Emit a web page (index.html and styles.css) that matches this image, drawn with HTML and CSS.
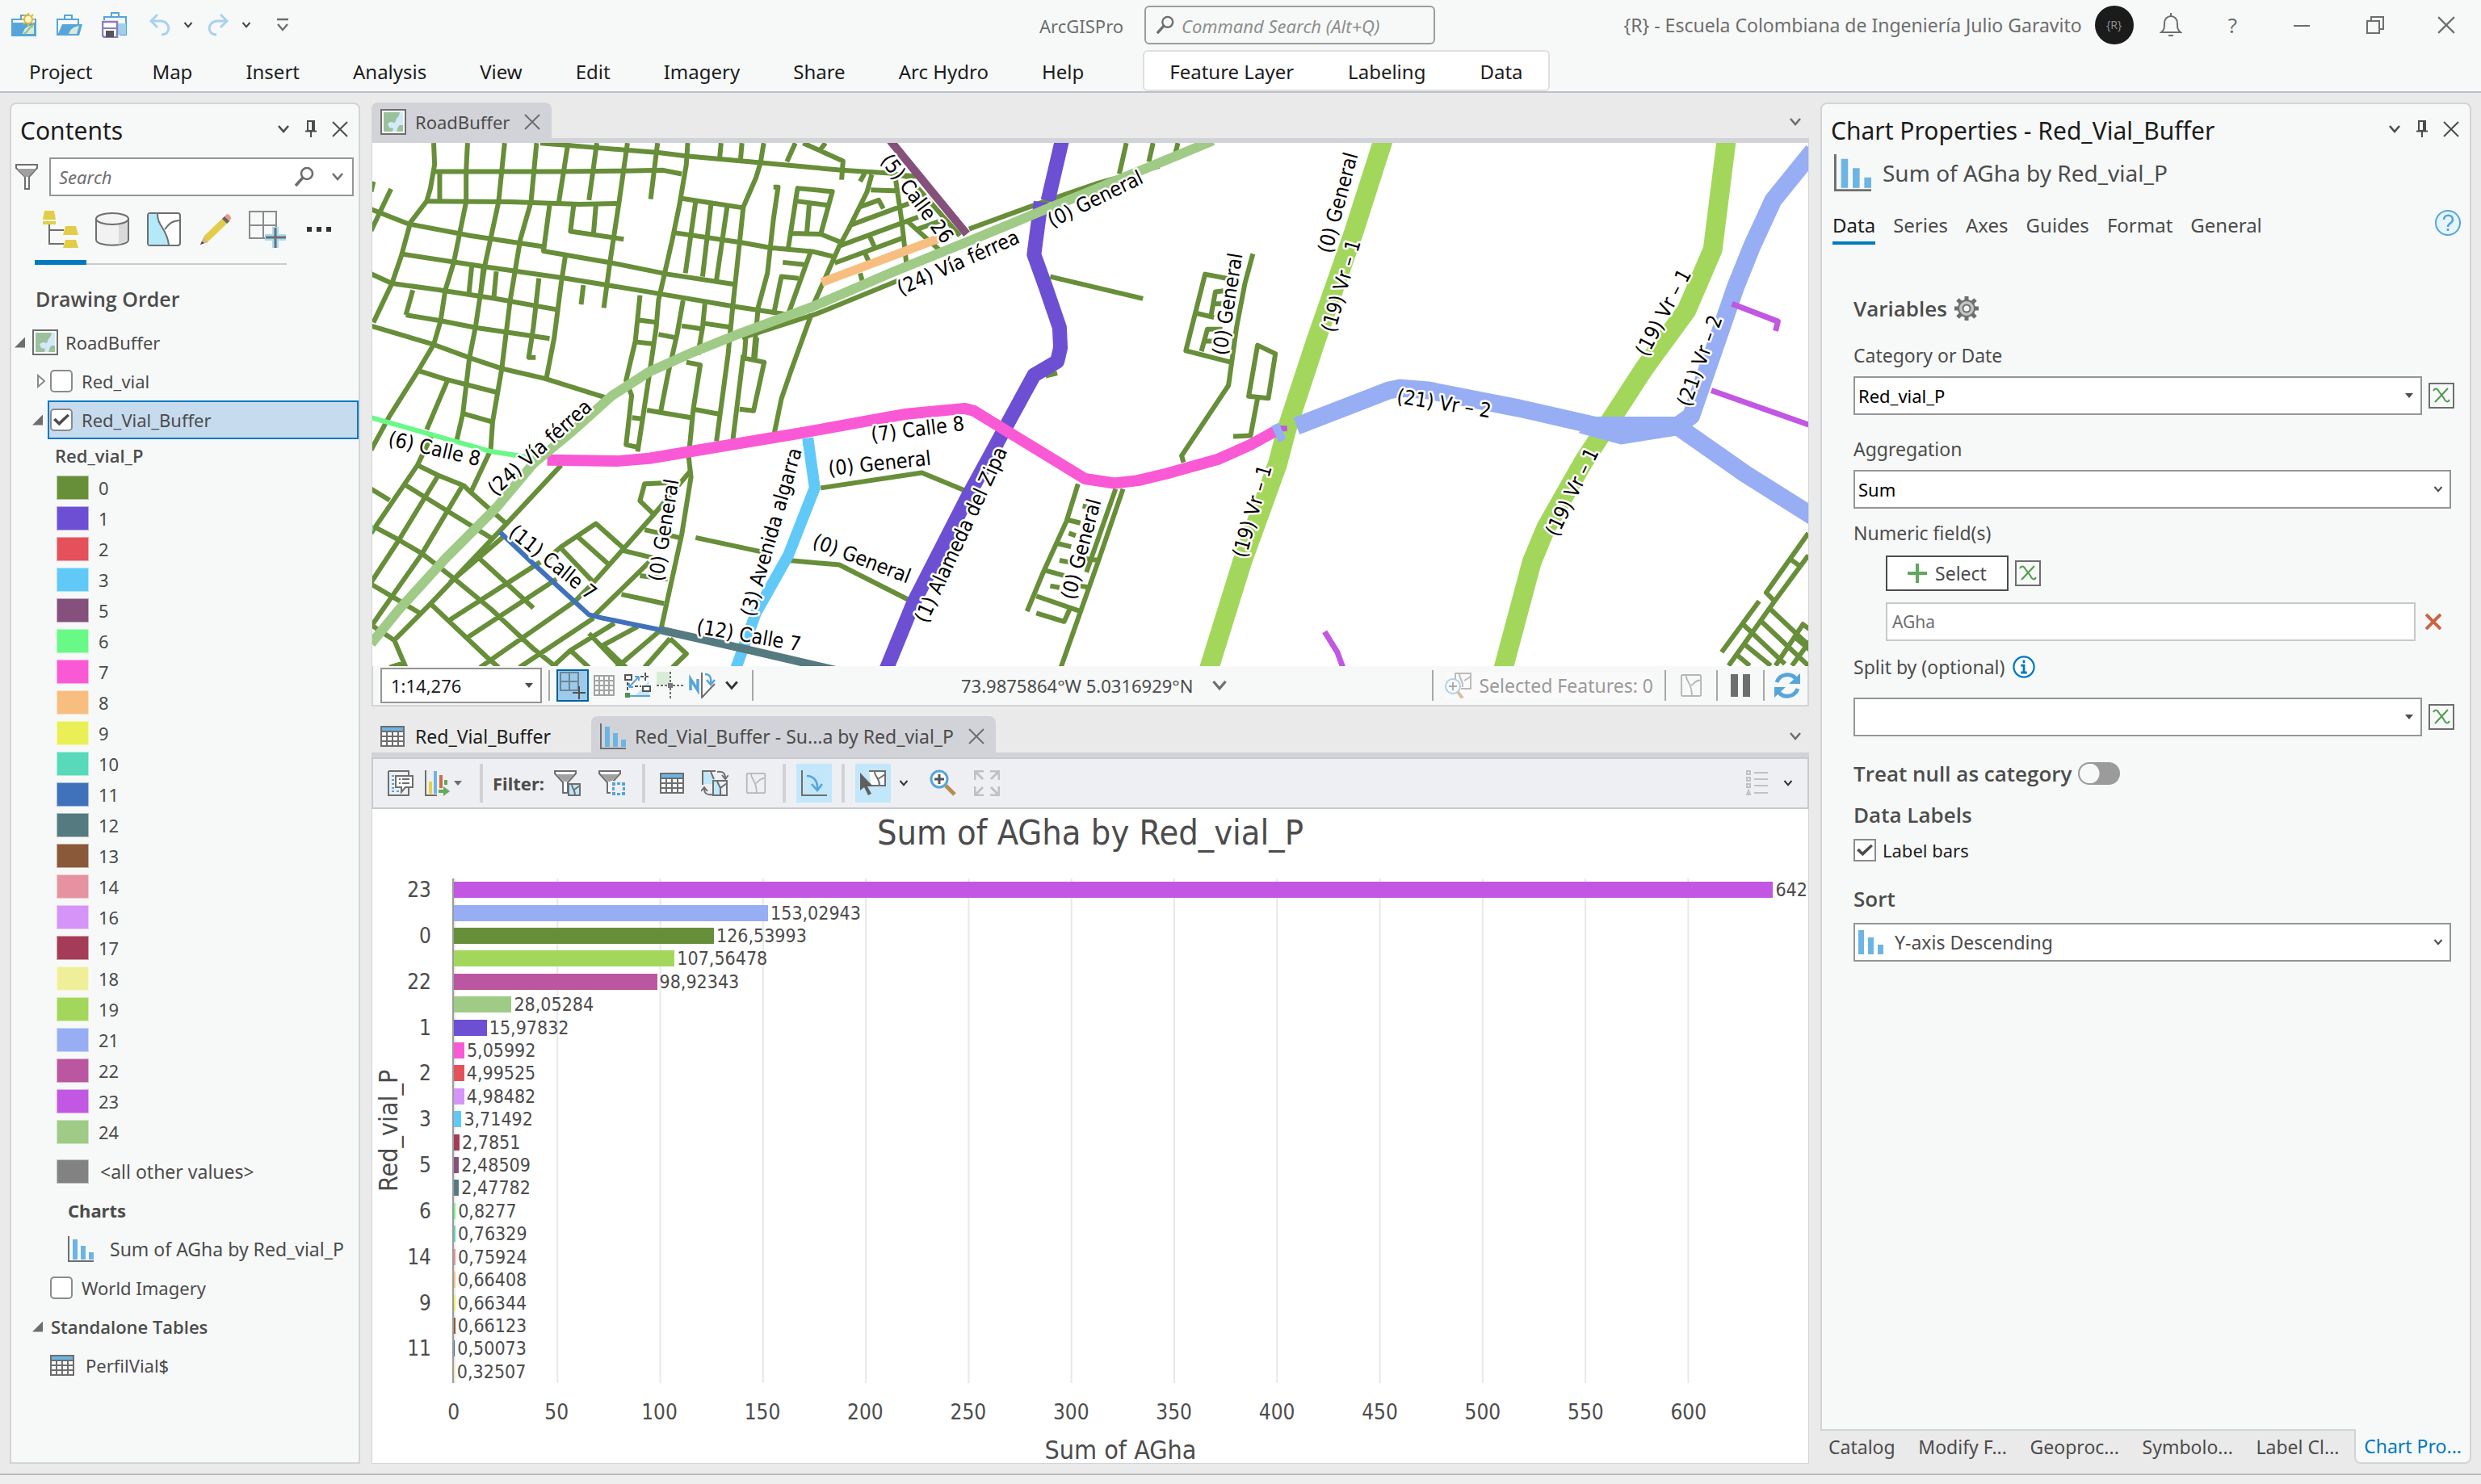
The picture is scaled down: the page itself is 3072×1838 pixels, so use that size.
FILE: index.html
```html
<!DOCTYPE html>
<html lang="en">
<head>
<meta charset="utf-8">
<title>ArcGISPro - RoadBuffer</title>
<link rel="stylesheet" href="styles.css">
</head>
<body>
<svg class="defs" aria-hidden="true">
  <symbol id="i-chev" viewBox="0 0 16 16"><path d="M2 4l6 7 6-7" fill="none" stroke="currentColor" stroke-width="2.6"/></symbol>
  <symbol id="i-tri" viewBox="0 0 12 12"><path d="M1 3h10L6 9z" fill="currentColor"/></symbol>
  <symbol id="i-close" viewBox="0 0 20 20"><path d="M1 1l18 18M19 1L1 19" fill="none" stroke="currentColor" stroke-width="2"/></symbol>
  <symbol id="i-pin" viewBox="0 0 16 22"><path d="M4 1h8v12H4zM1 13.500h14M8 13v8" fill="none" stroke="currentColor" stroke-width="2"/><path d="M9 2h3v11H9z" fill="currentColor"/></symbol>
  <symbol id="i-search" viewBox="0 0 26 26"><circle cx="16" cy="9" r="7" fill="none" stroke="currentColor" stroke-width="2.600"/><path d="M11 14L2 24" stroke="currentColor" stroke-width="3.600"/></symbol>
  <symbol id="i-chart" viewBox="0 0 32 32"><path d="M1 0v31h31" fill="none" stroke="#6e6e6e" stroke-width="2"/><path d="M6 4h6v25H6zM16 12h6v17h-6zM26 20h6v9h-6z" fill="#6cb5e3"/></symbol>
  <symbol id="i-table" viewBox="0 0 30 26"><path d="M0 0h30v26H0z" fill="#6e6e6e"/><path d="M2 2h26v4H2z" fill="#6cb5e3"/><path d="M2 8h5v4H2zM9 8h5v4H9zM16 8h5v4h-5zM23 8h5v4h-5zM2 14h5v4H2zM9 14h5v4H9zM16 14h5v4h-5zM23 14h5v4h-5zM2 20h5v4H2zM9 20h5v4H9zM16 20h5v4h-5zM23 20h5v4h-5z" fill="#fff"/></symbol>
  <symbol id="i-map" viewBox="0 0 32 32"><path d="M1 1h30v30H1z" fill="#fff" stroke="#6e6e6e" stroke-width="2"/><path d="M4 4h24v24H4z" fill="#9bc19c"/><path d="M24 4h4v16h-4l-2 2-2 6h-5l1-4-5-1-2-5 4-2 5 1 2-5 3-4z" fill="#d3e9f8"/></symbol>
  <symbol id="i-fx" viewBox="0 0 32 32"><path d="M1 1h30v30H1z" fill="#f7f9f8" stroke="#6e6e6e" stroke-width="2"/><path d="M6 10c2-4 5-3 7 1l6 8c2 5 5 6 7 2M24 7L8 24" fill="none" stroke="#4f9a4c" stroke-width="2"/></symbol>
  <symbol id="i-selmap" viewBox="0 0 28 30"><path d="M2 1h23q2 0 2 2v24q0 2-2 2H3q-2 0-2-2V2z" fill="none" stroke="currentColor" stroke-width="2"/><path d="M7 2c1 9 8 9 8 27M14 15c4-2 5-7 12-7" fill="none" stroke="currentColor" stroke-width="2"/></symbol>
</svg>

<header class="titlebar">
  <div class="quick">
    <button aria-label="New project"><svg viewBox="0 0 32 30" width="32" height="30"><path d="M1 28V8h11V3h7v5h11v20z" fill="none" stroke="#56a5da" stroke-width="2"/><path d="M0 12h30v16H0z" fill="#56a5da"/><path d="M14 26c2-8 6-10 14-11v11z" fill="#d8ead7"/><path d="M16 26c6-3 4-8 11-10" stroke="#8fbf8c" stroke-width="2" fill="none"/><circle cx="21" cy="8" r="5" fill="#fff7c9" stroke="#dcb93b" stroke-width="2"/><path d="M21 0v3M21 13v3M13 8h3M26 8h3M15 2l2 2M27 2l-2 2M15 14l2-2M27 14l-2-2" stroke="#dcb93b" stroke-width="2"/></svg></button>
    <button aria-label="Open project"><svg viewBox="0 0 32 30" width="32" height="30"><path d="M1 28V8h26v6M10 8V3h9v5" fill="none" stroke="#56a5da" stroke-width="2"/><path d="M1 28l6-14h25l-4 14z" fill="#56a5da"/><path d="M15 26c2-6 6-9 13-10l-3 10z" fill="#d8ead7"/></svg></button>
    <button aria-label="Save project"><svg viewBox="0 0 32 32" width="32" height="32"><path d="M3 10V6h27v22h-8M12 6V1h9v5" fill="none" stroke="#56a5da" stroke-width="2"/><path d="M20 14h10v14H20z" fill="#9fd0ea"/><path d="M1 12h18v19H3l-2-2z" fill="#fff" stroke="#8d7cc0" stroke-width="2.500"/><path d="M2 20h16" stroke="#8d7cc0" stroke-width="2"/><path d="M5 23h10v8H5z" fill="#555"/></svg></button>
    <button aria-label="Undo" class="pale"><svg viewBox="0 0 28 30" width="28" height="30"><path d="M11 2L3 10l8 8M3 10h12c13 1 13 17 1 17" fill="none" stroke="currentColor" stroke-width="3"/></svg></button>
    <button aria-label="Undo list" class="tiny"><svg width="12" height="12"><use href="#i-chev"/></svg></button>
    <button aria-label="Redo" class="pale"><svg viewBox="0 0 28 30" width="28" height="30"><path d="M17 2l8 8-8 8M25 10H13C0 11 0 27 12 27" fill="none" stroke="currentColor" stroke-width="3"/></svg></button>
    <button aria-label="Redo list" class="tiny"><svg width="12" height="12"><use href="#i-chev"/></svg></button>
    <button aria-label="Customize" class="custom"><svg viewBox="0 0 16 18" width="16" height="18"><path d="M1 2h14M2 8l6 7 6-7" fill="none" stroke="#6e6e6e" stroke-width="2.400"/></svg></button>
  </div>
  <span class="app-name">ArcGISPro</span>
  <label class="command"><svg width="24" height="24"><use href="#i-search"/></svg><input type="text" placeholder="Command Search (Alt+Q)" aria-label="Command Search"></label>
  <div class="account">
    <span class="user">{R} - Escuela Colombiana de Ingeniería Julio Garavito</span>
    <span class="avatar">{R}</span>
    <button aria-label="Notifications"><svg viewBox="0 0 28 32" width="28" height="32"><path d="M2 25c4-3 4-6 4-11 0-12 16-12 16 0 0 5 0 8 4 11zM14 1v4M11 29h6" fill="none" stroke="currentColor" stroke-width="2"/></svg></button>
    <button aria-label="Help" class="q">?</button>
    <button aria-label="Minimize"><svg viewBox="0 0 20 20" width="20" height="20"><path d="M0 11h20" stroke="currentColor" stroke-width="2"/></svg></button>
    <button aria-label="Restore"><svg viewBox="0 0 22 22" width="22" height="22"><path d="M1 6h15v15H1zM6 6V1h15v15h-5" fill="none" stroke="currentColor" stroke-width="2"/></svg></button>
    <button aria-label="Close"><svg width="22" height="22"><use href="#i-close"/></svg></button>
  </div>
</header>

<nav class="ribbon">
  <a href="#" class="first">Project</a><a href="#">Map</a><a href="#">Insert</a><a href="#">Analysis</a><a href="#">View</a><a href="#">Edit</a><a href="#">Imagery</a><a href="#">Share</a><a href="#">Arc Hydro</a><a href="#">Help</a>
  <div class="context"><a href="#">Feature Layer</a><a href="#">Labeling</a><a href="#">Data</a></div>
</nav>

<main class="workspace">
  <aside class="panel contents">
    <div class="panel-head"><h2>Contents</h2>
      <div class="panel-tools"><button aria-label="Menu"><svg width="16" height="16"><use href="#i-chev"/></svg></button><button aria-label="Auto hide"><svg width="16" height="22"><use href="#i-pin"/></svg></button><button aria-label="Close"><svg width="20" height="20"><use href="#i-close"/></svg></button></div></div>
    <div class="search-row">
      <svg viewBox="0 0 28 34" width="28" height="34"><path d="M1 2h26v4L17 17v15h-5V17L1 6z" fill="#fff" stroke="#6e6e6e" stroke-width="2"/><path d="M2 7h24L16 17h-4z" fill="#a0a0a0"/></svg>
      <label class="search-box"><input type="text" placeholder="Search" aria-label="Search"><svg width="26" height="26"><use href="#i-search"/></svg><svg width="16" height="16"><use href="#i-chev"/></svg></label>
    </div>
    <div class="list-tabs">
      <button class="active" aria-label="List by drawing order"><svg viewBox="0 0 46 46" width="46" height="46"><path d="M3 0h12l2 11H1zM1 13h16v4H1z" fill="#e3cd48"/><path d="M9 17v24h18M9 24h18" fill="none" stroke="#6e6e6e" stroke-width="2"/><path d="M29 19h13l3 11H26zM29 36h13l3 10H26z" fill="#e3cd48"/></svg></button>
      <button aria-label="List by source"><svg viewBox="0 0 42 42" width="42" height="42"><path d="M1 8v26c0 9 40 9 40 0V8z" fill="#f2f2f2" stroke="#6e6e6e" stroke-width="2"/><path d="M29 14l11-5v26l-11 5z" fill="#d9d9d9"/><ellipse cx="21" cy="8" rx="20" ry="7" fill="#f4f4f4" stroke="#6e6e6e" stroke-width="2"/></svg></button>
      <button aria-label="List by selection"><svg viewBox="0 0 42 42" width="42" height="42"><rect x="1" y="1" width="40" height="40" rx="3" fill="#fff" stroke="#6e6e6e" stroke-width="2"/><path d="M2 2h11c0 16 11 16 14 38H2z" fill="#b4e9fa"/><path d="M13 2c0 16 11 16 14 38M22 21c6-7 8-10 18-11" fill="none" stroke="#6e6e6e" stroke-width="2"/></svg></button>
      <button aria-label="List by editing"><svg viewBox="0 0 40 40" width="40" height="40"><path d="M1 39l5-11L31 4l6 6-25 24z" fill="#e3cd48"/><path d="M31 4l3-3q5 1 5 6l-3 4z" fill="#e69a86"/><path d="M28 7l3-3 6 6-3 3z" fill="#666"/><path d="M1 39l4-9 6 6z" fill="#d9b58c"/><path d="M1 39l2-4 3 2z" fill="#444"/></svg></button>
      <button aria-label="List by snapping"><svg viewBox="0 0 46 46" width="46" height="46"><path d="M1 1h33v33H1zM18 1v33M1 18h33" fill="none" stroke="#8b8b8b" stroke-width="2"/><path d="M29 20h8v9h9v8h-9v9h-8v-9h-9v-8h9z" fill="#a9dcf7"/><path d="M33 21v25M21 33h25" stroke="#6e6e6e" stroke-width="3"/></svg></button>
      <button aria-label="More"><svg viewBox="0 0 30 8" width="30" height="8"><path d="M0 1h6v6H0zM12 1h6v6h-6zM24 1h6v6h-6z" fill="#333"/></svg></button>
    </div>
    <h3>Drawing Order</h3>
    <div class="tree">
      <div class="row lv0"><span class="open"></span><svg width="32" height="32"><use href="#i-map"/></svg><span>RoadBuffer</span></div>
      <div class="row lv1"><svg class="closed" viewBox="0 0 10 18" width="10" height="18"><path d="M1 2v14l8-7z" fill="#fff" stroke="#8b8b8b" stroke-width="2"/></svg><label><input type="checkbox"><span>Red_vial</span></label></div>
      <div class="row lv1 selected"><span class="open"></span><label><input type="checkbox" checked><span>Red_Vial_Buffer</span></label></div>
      <div class="field">Red_vial_P</div>
      <ul class="legend">
        <li><i style="background:#678e38"></i>0</li>
        <li><i style="background:#6c4fd3"></i>1</li>
        <li><i style="background:#e5515a"></i>2</li>
        <li><i style="background:#61c9f8"></i>3</li>
        <li><i style="background:#85507b"></i>5</li>
        <li><i style="background:#69f987"></i>6</li>
        <li><i style="background:#fa59d5"></i>7</li>
        <li><i style="background:#f8be80"></i>8</li>
        <li><i style="background:#e9ef54"></i>9</li>
        <li><i style="background:#58d9b9"></i>10</li>
        <li><i style="background:#4072bb"></i>11</li>
        <li><i style="background:#557a80"></i>12</li>
        <li><i style="background:#8a5939"></i>13</li>
        <li><i style="background:#e792a1"></i>14</li>
        <li><i style="background:#d594f7"></i>16</li>
        <li><i style="background:#a43c57"></i>17</li>
        <li><i style="background:#f0ef99"></i>18</li>
        <li><i style="background:#a3d75c"></i>19</li>
        <li><i style="background:#97aef4"></i>21</li>
        <li><i style="background:#bb56a0"></i>22</li>
        <li><i style="background:#c257e3"></i>23</li>
        <li><i style="background:#9fcb86"></i>24</li>
        <li class="other"><i style="background:#828282"></i>&lt;all other values&gt;</li>
      </ul>
      <div class="row charts">Charts</div>
      <div class="row chart-item"><svg width="32" height="32"><use href="#i-chart"/></svg><span>Sum of AGha by Red_vial_P</span></div>
      <div class="row lv1 leaf"><label><input type="checkbox"><span>World Imagery</span></label></div>
      <div class="row lv1 semi"><span class="open"></span><span>Standalone Tables</span></div>
      <div class="row lv1 leaf table-item"><svg width="30" height="26"><use href="#i-table"/></svg><span>PerfilVial$</span></div>
    </div>
  </aside>

  <div class="center">
    <section class="map-pane">
      <div class="tabs"><div class="tab active"><svg width="32" height="32"><use href="#i-map"/></svg><span>RoadBuffer</span><button aria-label="Close tab"><svg width="20" height="20"><use href="#i-close"/></svg></button></div><button class="tabs-menu" aria-label="Tab list"><svg width="16" height="16"><use href="#i-chev"/></svg></button></div>
      <svg class="map" viewBox="0 0 1779 648" preserveAspectRatio="xMidYMid slice" role="img" aria-label="Road map">
        <g class="roads" transform="matrix(.574 0 0 .4209 -1 -7)">
          <g class="local">
            <path d="M365 17L480 30 620 45 680 55 840 75 1015 97 1120 106 1170 120M135 101H400L545 99 630 97 670 108M120 188L300 190 450 197 535 195M0 212L80 255 215 290 372 322V335L520 370 640 403 785 433M68 344L250 382 420 415 620 460 780 497 900 522M0 402L45 430 140 448 270 475 400 507M75 523L150 540 225 560 385 592M0 555L135 610 215 650 280 680 375 710 515 770M105 688L160 712 275 752M198 813L262 838"/>
            <path d="M135 17L137 80 128 150 120 188 85 250 65 350 45 430 5 545M148 105V185M208 17L205 100V190L178 370 160 450 150 540 135 610 100 690 40 820 0 920M288 17L275 190 245 380 225 560 212 650 198 813 185 890M357 17L345 190 322 300 300 480 282 680 262 838 258 920 215 1045M425 17L405 190M385 200L372 335M487 17L470 185M553 17L535 190 515 370 502 502M618 17L603 182M683 17L680 80 665 200 650 300 620 480 615 560 600 700 575 925"/>
            <path d="M437 200L430 277 545 300M485 200L480 280M420 340L410 430 395 590 378 710M217 380L211 460M242 385L236 465M270 395L265 470M362 415L350 560 340 648H355M90 450L75 523M458 435L453 492M670 180L800 207M700 190L678 400M733 200L715 410M768 205L745 420M755 17L752 60M800 17L797 65M847 17L840 75 830 120 803 205 780 500 770 640 745 895M915 17L897 72M932 17L1018 70 1015 125M980 17L970 35M650 280L800 310 860 325 955 337 1000 352M868 147H878L868 240 855 400 835 500 825 650M900 325L920 150 995 160 970 285 905 283M918 188L985 200M945 200L940 280M970 285L1015 310"/>
            <path d="M5 130L0 160M43 152L0 275M580 465L570 600 550 715 562 760 550 905 575 912M673 480L660 580 640 700 625 805M720 490L715 560 705 640M578 538L618 545M570 602L610 608M670 555L710 563M720 548L780 560M620 580L658 590M680 662L710 670 695 800 685 940 690 1000 670 1170 625 1450M595 803L690 825M563 825L590 830M695 800L752 815M810 560L805 650 848 662 825 805 795 800M832 590L828 650M803 640L780 895M950 520L905 690 885 770 870 870"/>
            <path d="M1080 110L1070 160 1030 270 1010 320 955 490M950 330L900 520M1055 130L1065 105M1078 155L1140 158M1130 110L1145 250 1155 375M1055 205L1095 185 1105 210M1035 258L1160 195M1010 320L1180 235M1000 370L1150 295M1065 340L1075 370M1075 290L1085 320M1055 400L1060 425M1155 245L1225 330M1180 270L1240 240M1130 110L1180 115 1215 175M1180 150L1270 290M888 368L935 375M922 415L885 410 870 510M1290 270L1360 235 1440 195 1568 135 1700 85M800 590L960 520 1140 420"/>
            <path d="M410 965L280 1155 130 1370 50 1480M0 1435L50 1480 75 1560M100 965L145 995 200 1025 215 1045 290 1135M70 1020L165 1100 260 1180M145 995L60 1185 0 1310M195 1030L110 1225 20 1400 0 1440M165 715L120 860M130 880L100 965 0 1165M0 1035L40 1068M5 1145L60 1185 110 1225 180 1300 260 1390 350 1505 400 1560M0 1315L50 1355 105 1400M130 1375L250 1530 275 1560M230 1235L350 1385M365 1250L170 1420M290 1170L170 1310M400 1300L210 1470M440 1365L235 1560M480 1415L320 1560M380 1240L410 1205 485 1137 545 1210M445 1175L515 1260M410 1210L480 1310M610 1110L480 1310 440 1365M600 1250L480 1410M690 980L610 1110M670 1015L590 1020 580 1070 610 1110M590 1155L665 1178M540 1215L615 1240M580 1290L640 1300M540 1345L632 1372M470 1460L540 1560M430 1510L470 1560M525 1430L430 1510 390 1560M575 1440L500 1495M500 1495L550 1560M625 1450L530 1560M645 1475L680 1520 650 1560M645 1475L590 1560M40 1560L75 1545"/>
            <path d="M970 1032L1188 987 1285 1042M700 1178L860 1225M900 1245L1010 1258 1165 1365M1465 410L1665 475M1455 702L1480 694M1525 1020L1500 1130 1450 1280 1415 1395M1606 1035L1543 1280M1622 1035L1568 1250 1488 1560M1500 1125L1530 1135M1480 1195L1510 1205M1455 1275L1495 1290M1435 1350L1530 1395M1435 1400L1495 1425 1510 1380M1535 1085L1550 1090M1505 1165L1520 1172M1485 1245L1505 1250M1465 1320L1485 1325M1540 1240L1570 1245M1530 1320L1550 1325"/>
          </g>
        </g>
        <g class="roads" transform="matrix(.5804 0 0 .4209 879 -7)">
          <g class="local">
            <path d="M95 17L80 108M152 17L143 72M205 17L200 45M365 343L348 430 330 560 313 730 213 937 217 957M320 418L263 403 222 628 318 662M245 518L282 530M302 452L285 455 275 530M283 490H312M255 630L268 565H300M265 600H290M375 612L413 637 398 768 356 762ZM375 768L360 878 323 880"/>
            <path d="M1550 1165L1460 1340 1478 1365 1380 1555M1550 1230L1478 1365M1510 1240L1535 1265M1445 1365L1365 1515M1470 1390L1555 1500M1450 1425L1550 1555M1412 1435L1500 1550M1412 1490L1470 1555M1395 1520L1425 1555M1540 1430L1480 1555M1535 1430L1555 1450M1520 1470L1555 1510M1555 1480L1515 1555"/>
          </g>
          <path d="M645 0L580 280 499 600 437 860 418 960 342 1250 270 1570" stroke="#a3d75c" stroke-width="24"/>
          <path d="M1376 0L1346 330 1290 510 1200 680 1068 960 990 1150 960 1250 898 1570" stroke="#a3d75c" stroke-width="24"/>
          <path d="M458 850L655 745 680 738 740 745 935 798 1085 845 1150 868 1270 850" stroke="#97aef4" stroke-width="22"/>
          <path d="M1085 822H1270L1300 850 1270 878 1150 904 1060 870Z" fill="#97aef4"/>
          <path d="M1270 850L1300 820 1395 440 1430 320 1475 185 1560 40M1270 850L1415 990 1570 1125" stroke="#97aef4" stroke-width="22"/>
          <path d="M1387 490L1485 542 1480 570M1343 745L1555 848M518 1455L545 1515 557 1560" stroke="#c257e3" stroke-width="7"/>
        </g>
        <g class="roads" transform="matrix(.574 0 0 .4209 -1 -7)">
          <path d="M0 825L260 925 370 948" stroke="#69f987" stroke-width="6"/>
          <path d="M0 1150H5" stroke="#58d9b9" stroke-width="7"/>
          <path d="M942 885L957 1032 900 1230 830 1400 785 1570" stroke="#61c9f8" stroke-width="14"/>
          <path d="M278 1162L350 1255 470 1405 500 1415 625 1450" stroke="#4072bb" stroke-width="6"/>
          <path d="M625 1450L820 1510 1040 1580" stroke="#557a80" stroke-width="10"/>
          <path d="M1492 0L1460 187M1445 190L1430 345 1455 440 1485 560 1487 620 1480 660 1430 700 1370 850 1290 1050 1170 1370 1110 1570" stroke="#6c4fd3" stroke-width="18"/>
          <path d="M380 950L530 953 600 945 920 872 1150 815 1280 798 1300 805 1540 1005 1604 1018 1654 1010 1715 990 1826 948 1897 905 1950 865" stroke="#fa59d5" stroke-width="14"/>
          <path d="M972 427L1250 285" stroke="#f8be80" stroke-width="11"/>
          <path d="M0 1490L60 1390 160 1240 270 1090 350 960 430 870 520 760 600 690 690 635 800 575 950 500 1120 400 1300 300 1450 215 1568 150 1816 10" stroke="#9fcb86" stroke-width="12"/>
          <path d="M1120 10L1285 285" stroke="#85507b" stroke-width="10"/>
          <path d="M1952 857H1976" stroke="#c257e3" stroke-width="7"/>
          <path d="M1950 845L1966 893" stroke="#97aef4" stroke-width="10"/>
        </g>
        <g class="names">
          <text transform="translate(629 22) rotate(53)">(5) Calle 26</text>
          <text transform="translate(842 105) rotate(-26)">(0) General</text>
          <text transform="translate(655 189) rotate(-24)">(24) Vía férrea</text>
          <text transform="translate(153 438) rotate(-42)">(24) Vía férrea</text>
          <text transform="translate(19 374) rotate(13)">(6) Calle 8</text>
          <text transform="translate(168 485) rotate(39)">(11) Calle 7</text>
          <text transform="translate(401 607) rotate(10)">(12) Calle 7</text>
          <text transform="translate(360 544) rotate(-81)">(0) General</text>
          <text transform="translate(473 588) rotate(-74)">(3) Avenida algarra</text>
          <text transform="translate(566 412) rotate(-6)">(0) General</text>
          <text transform="translate(619 370) rotate(-7)">(7) Calle 8</text>
          <text transform="translate(544 500) rotate(21)">(0) General</text>
          <text transform="translate(687 596) rotate(-65)">(1) Alameda del Zipa</text>
          <text transform="translate(870 567) rotate(-75)">(0) General</text>
          <text transform="translate(1058 264) rotate(-81)">(0) General</text>
          <text transform="translate(1188 138) rotate(-75)">(0) General</text>
          <text transform="translate(1192 236) rotate(-74)">(19) Vr – 1</text>
          <text transform="translate(1082 515) rotate(-74)">(19) Vr – 1</text>
          <text transform="translate(1579 266) rotate(-62)">(19) Vr – 1</text>
          <text transform="translate(1468 489) rotate(-64)">(19) Vr – 1</text>
          <text transform="translate(1268 322) rotate(9)">(21) Vr – 2</text>
          <text transform="translate(1632 328) rotate(-70)">(21) Vr – 2</text>
        </g>
      </svg>
      <div class="map-status">
        <div class="combo scale"><select aria-label="Scale"><option>1:14,276</option></select><svg width="12" height="12"><use href="#i-tri"/></svg></div>
        <hr>
        <button class="on" aria-label="Snapping"><svg viewBox="0 0 32 34" width="32" height="34"><path d="M1 1h22v22H1zM12 1v22M1 12h22" fill="none" stroke="#6e8594" stroke-width="2"/><path d="M24 18v16M16 26h16" stroke="#505050" stroke-width="2"/></svg></button>
        <button aria-label="Grid"><svg viewBox="0 0 26 26" width="26" height="26"><path d="M1 1h24v24H1zM7 1v24M13 1v24M19 1v24M1 7h24M1 13h24M1 19h24" fill="none" stroke="#a3a3a3" stroke-width="2"/></svg></button>
        <button class="wider" aria-label="Inference"><svg viewBox="0 0 34 32" width="34" height="32"><path d="M14 28L31 10v18z" fill="#c5e5f6"/><path d="M1 3h8v6H1zM23 17h9v6h-9z" fill="#fff" stroke="#555" stroke-width="2"/><path d="M1 25h6v6H1z" fill="#4c9350"/><path d="M7 29h25" stroke="#56a5da" stroke-width="2"/><path d="M6 18L18 5M6 18v-5M6 18h5M18 5h-5M18 5v5" fill="none" stroke="#56a5da" stroke-width="2"/><path d="M20 5h11M26 0v11M4 12v12M13 17h8" stroke="#555" stroke-width="2" stroke-dasharray="4 2"/></svg></button>
        <button aria-label="Constraints"><svg viewBox="0 0 34 34" width="34" height="34"><path d="M0 0h16v16H0z" fill="#d9ecd7"/><path d="M17 0v34M0 17h34" stroke="#6e6e6e" stroke-width="2" stroke-dasharray="3 2"/><path d="M14 14h6v6h-6z" fill="#777"/></svg></button>
        <button aria-label="Correct to north"><svg viewBox="0 0 34 32" width="34" height="32"><path d="M2 22V8l9 14V8" fill="none" stroke="#56a5da" stroke-width="3.500"/><path d="M16 0v31l16-17" fill="none" stroke="#6e6e6e" stroke-width="2"/><path d="M20 2c6 0 8 4 7 12M22 9l5 6 5-6" fill="none" stroke="#56a5da" stroke-width="2.500"/></svg></button>
        <button class="dark" aria-label="More"><svg width="18" height="18"><use href="#i-chev"/></svg></button>
        <hr>
        <span class="coords">73.9875864°W 5.0316929°N</span>
        <button class="coord-menu" aria-label="Units"><svg width="20" height="20"><use href="#i-chev"/></svg></button>
        <hr class="push">
        <button class="sel-feat"><svg viewBox="0 0 34 32" width="34" height="32"><g fill="none" stroke-width="2"><path d="M13 8V1h19v19H20" stroke="#bbb"/><path d="M18 2c1 8 5 8 4 16M24 10l8-5" stroke="#bbb"/><circle cx="10" cy="17" r="9" stroke="#a9d1ea"/><path d="M5 17h10M10 12v10" stroke="#aaa"/><path d="M16 24l6 8" stroke="#d9bfa0" stroke-width="4"/></g></svg>Selected Features: 0</button>
        <hr>
        <button class="faint" aria-label="Selection"><svg width="26" height="28"><use href="#i-selmap"/></svg></button>
        <hr>
        <button class="pause" aria-label="Pause drawing"><svg viewBox="0 0 24 28" width="24" height="28"><path d="M0 0h9v28H0zM15 0h9v28h-9z" fill="#6e6e6e"/></svg></button>
        <hr>
        <button class="refresh" aria-label="Refresh"><svg viewBox="0 0 32 32" width="32" height="32"><path d="M3 12C7 1 21 0 27 8M29 20C25 31 11 32 5 24" fill="none" stroke="#56a5da" stroke-width="5"/><path d="M32 1v13H18zM0 31V18h14z" fill="#56a5da"/></svg></button>
      </div>
    </section>

    <section class="chart-pane">
      <div class="tabs"><div class="tab plain"><svg width="30" height="26"><use href="#i-table"/></svg><span>Red_Vial_Buffer</span></div><div class="tab active"><svg width="32" height="32"><use href="#i-chart"/></svg><span>Red_Vial_Buffer - Su...a by Red_vial_P</span><button aria-label="Close tab"><svg width="20" height="20"><use href="#i-close"/></svg></button></div><button class="tabs-menu" aria-label="Tab list"><svg width="16" height="16"><use href="#i-chev"/></svg></button></div>
      <div class="toolbar">
        <button aria-label="Properties"><svg viewBox="0 0 32 32" width="32" height="32"><path d="M1 1h25v6M1 1v30h25v-9" fill="none" stroke="#6e6e6e" stroke-width="2"/><path d="M5 7h3M5 12h3M5 17h3M5 22h3M5 26h3M11 26h3" stroke="#56a5da" stroke-width="2"/><path d="M10 7h21v14h-9l-5 6v-6h-7z" fill="#fff" stroke="#6e6e6e" stroke-width="2"/><path d="M14 11h2M14 16h2M18 11h9M18 16h9" stroke="#6e6e6e" stroke-width="2"/></svg></button>
        <button class="export" aria-label="Export"><svg viewBox="0 0 32 32" width="32" height="32"><path d="M1 0v31h14" fill="none" stroke="#6e6e6e" stroke-width="2"/><path d="M5 14h4v15H5z" fill="#e8cf43"/><path d="M11 1h4v28h-4z" fill="#6cb5e3"/><path d="M18 6h4v16h-4z" fill="#d2694a"/><path d="M24 12h4v6h-4zM17 24h6v-4l8 6-8 6v-4h-6z" fill="#62ab5b"/></svg></button>
        <svg class="tri" width="14" height="12"><use href="#i-tri"/></svg>
        <hr>
        <strong>Filter:</strong>
        <button aria-label="Filter by extent"><svg viewBox="0 0 34 32" width="34" height="32"><path d="M1 1h26v3L17 15v13h-6V15L1 4z" fill="#fff" stroke="#6e6e6e" stroke-width="2"/><path d="M3 5h22l-9 9h-4z" fill="#a0a0a0"/><path d="M18 17h14v14H18z" fill="#bfe6f7" stroke="#6e6e6e" stroke-width="2"/><path d="M22 17c0 6 4 6 4 14M25 24l7-5" fill="none" stroke="#6e6e6e" stroke-width="2"/></svg></button>
        <button aria-label="Filter by selection"><svg viewBox="0 0 34 32" width="34" height="32"><path d="M1 1h26v3L17 15v13h-6V15L1 4z" fill="#fff" stroke="#6e6e6e" stroke-width="2"/><path d="M3 5h22l-9 9h-4z" fill="#a0a0a0"/><path d="M15 13h19v19H15z" fill="#eeeff2"/><path d="M17 15h4v4h-4zM23 15h4v3h-4zM29 15h4v4h-4zM17 21h3v4h-3zM30 21h3v4h-3zM17 27h4v4h-4zM23 28h4v3h-4zM29 27h4v4h-4z" fill="#56a5da"/></svg></button>
        <hr>
        <button aria-label="Table"><svg width="30" height="28"><use href="#i-table"/></svg></button>
        <button aria-label="Switch selection"><svg viewBox="0 0 34 32" width="34" height="32"><path d="M2 18V1h16" fill="none" stroke="#6e6e6e" stroke-width="2"/><path d="M3 2h6l7 10-1 5H3zM16 14h6l5 16H16z" fill="#bfe9f9"/><path d="M15 13h17v18H15zM12 2l4 9M20 14l4 8 8-6M24 22v9M20 2c8-1 10 2 10 8M26 6l4 5 4-5M14 30c-8 1-10-2-10-8M0 26l4-5 4 5" fill="none" stroke="#6e6e6e" stroke-width="2"/></svg></button>
        <button class="faint" aria-label="Clear selection"><svg width="26" height="26"><use href="#i-selmap"/></svg></button>
        <hr>
        <button class="lit" aria-label="Sort"><svg viewBox="0 0 32 32" width="32" height="32"><path d="M1 0v31h31" fill="none" stroke="#6e6e6e" stroke-width="2"/><path d="M7 7c8 0 14 6 13 17M13 17l7 8 6-8" fill="none" stroke="#56a5da" stroke-width="2.600"/></svg></button>
        <hr>
        <button class="lit" aria-label="Select"><svg viewBox="0 0 34 32" width="34" height="32"><path d="M12 1h20v18H15" fill="#fff" stroke="#6e6e6e" stroke-width="2"/><path d="M19 2c0 6 6 7 6 17M23 11l9-6" fill="none" stroke="#6e6e6e" stroke-width="2"/><path d="M1 3v22l5-4 5 10 4-2-5-9h7z" fill="#606060"/></svg></button>
        <button class="dark chev" aria-label="Select menu"><svg width="12" height="12"><use href="#i-chev"/></svg></button>
        <button aria-label="Zoom"><svg viewBox="0 0 34 34" width="34" height="34"><circle cx="12" cy="12" r="10" fill="#fff" stroke="#56a5da" stroke-width="3"/><path d="M6 12h12M12 6v12" stroke="#555" stroke-width="3"/><path d="M20 20l11 11" stroke="#b98b53" stroke-width="5"/></svg></button>
        <button aria-label="Full extent"><svg viewBox="0 0 32 32" width="32" height="32"><path d="M1 12V1h11M1 1l10 10M20 1h11v11M31 1L21 11M1 20v11h11M1 31l10-10M31 20v11H20M31 31L21 21" fill="none" stroke="#bfc1c4" stroke-width="3"/></svg></button>
        <button class="push" aria-label="Legend"><svg viewBox="0 0 28 32" width="28" height="32"><path d="M1 1h4v4H1zM1 9h4v4H1zM1 17h4v4H1zM1 30l2-5 2 5zM10 3h17M10 11h17M10 19h17M10 28h17" fill="none" stroke="#bfc1c4" stroke-width="2"/></svg></button>
        <button class="dark end" aria-label="Legend menu"><svg width="12" height="12"><use href="#i-chev"/></svg></button>
      </div>
      <div class="chart">
        <h1>Sum of AGha by Red_vial_P</h1>
        <div class="y-title">Red_vial_P</div>
        <div class="cats"><span>23</span><span></span><span>0</span><span></span><span>22</span><span></span><span>1</span><span></span><span>2</span><span></span><span>3</span><span></span><span>5</span><span></span><span>6</span><span></span><span>14</span><span></span><span>9</span><span></span><span>11</span><span></span></div>
        <div class="plot">
          <div><i style="width:97.400%;background:#c257e3"></i>642</div>
          <div><i style="width:23.200%;background:#97aef4"></i>153,02943</div>
          <div><i style="width:19.200%;background:#678e38"></i>126,53993</div>
          <div><i style="width:16.300%;background:#a3d75c"></i>107,56478</div>
          <div><i style="width:15%;background:#bb56a0"></i>98,92343</div>
          <div><i style="width:4.260%;background:#9fcb86"></i>28,05284</div>
          <div><i style="width:2.430%;background:#6c4fd3"></i>15,97832</div>
          <div><i style="width:.770%;background:#fa59d5"></i>5,05992</div>
          <div><i style="width:.760%;background:#e5515a"></i>4,99525</div>
          <div><i style="width:.760%;background:#d594f7"></i>4,98482</div>
          <div><i style="width:.560%;background:#61c9f8"></i>3,71492</div>
          <div><i style="width:.420%;background:#a43c57"></i>2,7851</div>
          <div><i style="width:.380%;background:#85507b"></i>2,48509</div>
          <div><i style="width:.380%;background:#557a80"></i>2,47782</div>
          <div><i style="width:.130%;background:#69f987"></i>0,8277</div>
          <div><i style="width:.120%;background:#58d9b9"></i>0,76329</div>
          <div><i style="width:.120%;background:#e792a1"></i>0,75924</div>
          <div><i style="width:.100%;background:#f8be80"></i>0,66408</div>
          <div><i style="width:.100%;background:#e9ef54"></i>0,66344</div>
          <div><i style="width:.100%;background:#8a5939"></i>0,66123</div>
          <div><i style="width:.080%;background:#4072bb"></i>0,50073</div>
          <div><i style="width:.050%;background:#f0ef99"></i>0,32507</div>
        </div>
        <div class="ticks"><span>0</span><span>50</span><span>100</span><span>150</span><span>200</span><span>250</span><span>300</span><span>350</span><span>400</span><span>450</span><span>500</span><span>550</span><span>600</span></div>
        <div class="x-title">Sum of AGha</div>
      </div>
    </section>
  </div>

  <aside class="props">
    <div class="panel">
      <div class="panel-head"><h2>Chart Properties - Red_Vial_Buffer</h2>
        <div class="panel-tools"><button aria-label="Menu"><svg width="16" height="16"><use href="#i-chev"/></svg></button><button aria-label="Auto hide"><svg width="16" height="22"><use href="#i-pin"/></svg></button><button aria-label="Close"><svg width="20" height="20"><use href="#i-close"/></svg></button></div></div>
      <div class="chart-name"><svg width="46" height="46"><use href="#i-chart"/></svg><span>Sum of AGha by Red_vial_P</span></div>
      <nav class="prop-tabs"><a href="#" class="active">Data</a><a href="#">Series</a><a href="#">Axes</a><a href="#">Guides</a><a href="#">Format</a><a href="#">General</a><button aria-label="Help"><svg viewBox="0 0 32 32" width="32" height="32"><circle cx="16" cy="16" r="15" fill="#e6f4fb" stroke="#56a5da" stroke-width="2"/><path d="M11 12c0-7 11-7 11 0 0 5-6 4-6 9M16 23v3" fill="none" stroke="#56a5da" stroke-width="2.600"/></svg></button></nav>
      <form class="form">
        <h3>Variables <svg viewBox="0 0 32 32" width="32" height="32"><path d="M16 1v30M1 16h30M5 5l22 22M27 5L5 27" stroke="#6e6e6e" stroke-width="5"/><circle cx="16" cy="16" r="10" fill="#c4c4c4" stroke="#6e6e6e" stroke-width="2"/><circle cx="16" cy="16" r="4.500" fill="#f7f9f8" stroke="#6e6e6e" stroke-width="2"/></svg></h3>
        <label class="lb a" for="cat">Category or Date</label>
        <div class="line"><div class="combo"><select id="cat"><option>Red_vial_P</option></select><svg width="12" height="12"><use href="#i-tri"/></svg></div><button type="button" aria-label="Expression"><svg width="32" height="32"><use href="#i-fx"/></svg></button></div>
        <label class="lb b" for="agg">Aggregation</label>
        <div class="combo wide"><select id="agg"><option>Sum</option></select><svg width="12" height="12"><use href="#i-chev"/></svg></div>
        <label class="lb c" for="num">Numeric field(s)</label>
        <div class="line inset"><button type="button" class="select-btn"><svg viewBox="0 0 24 24" width="24" height="24"><path d="M12 0v24M0 12h24" stroke="#5fa85b" stroke-width="4"/></svg>Select</button><button type="button" aria-label="Expression"><svg width="32" height="32"><use href="#i-fx"/></svg></button></div>
        <div class="line inset second"><input id="num" type="text" value="AGha"><button type="button" aria-label="Remove"><svg viewBox="0 0 20 20" width="20" height="20"><path d="M1 1l18 18M19 1L1 19" stroke="#cc6242" stroke-width="4"/></svg></button></div>
        <label class="lb d" for="split">Split by (optional) <svg viewBox="0 0 30 30" width="28" height="28"><circle cx="15" cy="15" r="13.500" fill="#fff" stroke="#0079c1" stroke-width="2.400"/><path d="M15 6v4M11 13h4v9M11 22.500h8" fill="none" stroke="#0079c1" stroke-width="3"/></svg></label>
        <div class="line"><div class="combo"><select id="split"><option></option></select><svg width="12" height="12"><use href="#i-tri"/></svg></div><button type="button" aria-label="Expression"><svg width="32" height="32"><use href="#i-fx"/></svg></button></div>
        <label class="h toggle">Treat null as category <input type="checkbox" role="switch"></label>
        <h3 class="dl">Data Labels</h3>
        <label class="check"><input type="checkbox" checked>Label bars</label>
        <h3 class="sort"><label for="sort">Sort</label></h3>
        <div class="combo wide sorted"><svg class="lead" viewBox="0 0 32 32" width="32" height="32"><path d="M0 1h7v30H0zM12 10h7v21h-7zM24 19h7v12h-7z" fill="#6cb5e3"/></svg><select id="sort"><option>Y-axis Descending</option></select><svg width="12" height="12"><use href="#i-chev"/></svg></div>
      </form>
    </div>
    <nav class="pane-tabs"><a href="#">Catalog</a><a href="#">Modify F...</a><a href="#">Geoproc...</a><a href="#">Symbolo...</a><a href="#">Label Cl...</a><a href="#" class="active">Chart Pro...</a></nav>
  </aside>
</main>
<footer class="status"></footer>
</body>
</html>
```
FILE: styles.css
```css
* { box-sizing: border-box; }
html, body { height: 100%; }
body {
  margin: 0;
  display: flex;
  flex-direction: column;
  background: #eaeaea;
  color: #4c4c4c;
  font: 22px/32px "Noto Sans", "Open Sans", sans-serif;
}
button, input, select { font: inherit; color: inherit; }
button { padding: 0; border: 0; background: none; display: flex; align-items: center; justify-content: center; }
a { color: inherit; text-decoration: none; }
h1, h2, h3, ul { margin: 0; padding: 0; font-weight: 400; }
svg { flex: none; }
.defs { position: absolute; width: 0; height: 0; }
hr { width: 2px; height: 38px; margin: 0; border: 0; background: #a6a8a9; flex: none; }
.push { margin-left: auto; }
.dark { color: #333; }
.faint { color: #b4b6b7; }

/* title bar */
.titlebar {
  display: grid;
  grid-template-columns: 1287px 130px 360px 1fr;
  align-items: center;
  height: 62px;
  padding-right: 32px;
  background: #f7f9f8;
  color: #6e6e6e;
  flex: none;
}
.quick { display: flex; align-items: center; padding-left: 14px; }
.quick button { width: 32px; margin-right: 24px; }
.quick .pale { color: #a9d2ec; margin-right: 12px; }
.quick .tiny { width: 14px; margin-right: 14px; color: #444; }
.quick .custom { margin-left: 8px; }
.app-name { padding-top: 2px; }
.command { display: flex; align-items: center; gap: 8px; height: 48px; padding: 0 12px; border: 2px solid #9b9d9d; border-radius: 6px; }
.command input, .search-box input { flex: 1; width: 100%; min-width: 0; padding: 0; border: 0; background: none; outline: 0; }
.command input { padding-top: 2px; }
.command input::placeholder { font-style: italic; color: #8e8e8e; }
.account { display: flex; align-items: center; justify-content: flex-end; }
.user { font-size: 23px; white-space: nowrap; }
.avatar { width: 48px; height: 48px; margin: 0 32px 0 16px; border-radius: 50%; background: #1b1b1b; color: #8c8c8c; font-size: 14px; line-height: 48px; text-align: center; }
.account .q { margin: 0 70px 0 57px; font-size: 26px; }
.account button:nth-of-type(3) { margin-right: 70px; }
.account button:nth-of-type(4) { margin-right: 66px; }

/* ribbon */
.ribbon { display: flex; align-items: center; height: 53px; padding-left: 3px; background: #f7f9f8; border-bottom: 2px solid #bdc0c7; color: #1c1c1c; font-size: 24px; flex: none; }
.ribbon a { padding: 3px 33px 0; }
.ribbon .first { padding-right: 41px; }
.context { display: flex; align-items: center; align-self: stretch; margin-left: 40px; background: #fff; border: 2px solid #dfdfdf; border-radius: 6px; }
.context a { padding: 3px 31px 0; }
.context a + a { padding-left: 36px; }

/* workspace */
.workspace { flex: 1; min-height: 0; display: grid; grid-template-columns: 434px minmax(0, 1fr) 806px; gap: 14px; padding: 12px; }
.status { height: 13px; border-top: 2px solid #bbbbbb; background: #eee; flex: none; }
.panel { background: #f7f9f8; border: 2px solid #d2d4d9; border-radius: 8px 8px 0 0; min-width: 0; }
.panel-head { display: flex; align-items: center; justify-content: space-between; height: 62px; padding: 0 13px 0 11px; color: #1c1c1c; }
.panel-head h2 { padding-top: 3px; font-size: 30px; }
.panel-tools { display: flex; align-items: center; gap: 18px; color: #4c4c4c; }

.search-row { display: flex; align-items: center; gap: 14px; padding: 4px 6px 0 5px; }
.search-box { flex: 1; min-width: 0; display: flex; align-items: center; gap: 20px; height: 48px; padding: 0 10px; background: #fff; border: 2px solid #959595; color: #6e6e6e; }
.search-box input::placeholder { font-style: italic; color: #6e6e6e; }
.list-tabs { display: flex; height: 67px; margin: 18px 0 0 29px; width: 384px; background: linear-gradient(#cacaca, #cacaca) 0 100% / 312px 2px no-repeat; }
.list-tabs button { width: 64px; height: 67px; padding-bottom: 16px; border-bottom: 6px solid transparent; }
.list-tabs .active { border-color: #0079c1; }
.contents h3 { padding: 26px 0 14px 30px; font: 600 25px/32px "Open Sans", "Noto Sans", sans-serif; }

.row { display: flex; align-items: center; height: 48px; }
.row label { display: flex; align-items: center; }
.row span { white-space: nowrap; }
.row input, .check input { appearance: none; margin: 0; width: 28px; height: 28px; border: 2px solid #8b8b8b; border-radius: 5px; background: #fff; display: grid; place-items: center; flex: none; }
.row input:checked::after, .check input:checked::after { content: ""; width: 20px; height: 16px; background: #4c4c4c; clip-path: polygon(0 52%, 14% 36%, 36% 64%, 88% 4%, 100% 18%, 37% 96%); }
.row label { gap: 11px; padding-left: 3px; }
.open { width: 13px; height: 13px; background: #6e6e6e; clip-path: polygon(100% 0, 100% 100%, 0 100%); flex: none; }
.lv0 { padding-left: 4px; gap: 9px; }
.lv1 { padding-left: 26px; gap: 6px; }
.lv1 .closed { margin: 0 -3px 0 6px; }
.leaf { padding-left: 45px; }
.selected label { flex: 1; height: 48px; padding-left: 1px; background: #c6dbee; border: 2px solid #0079c1; }
.field { padding-left: 54px; font: 600 22px/40px "Open Sans", "Noto Sans", sans-serif; }
.legend { list-style: none; padding-top: 1px; }
.legend li { display: flex; align-items: center; gap: 12px; height: 38px; padding-left: 56px; }
.legend i { width: 40px; height: 30px; border: 1px solid rgba(255, 255, 255, .5); }
.legend .other { height: 48px; margin-top: 6px; gap: 14px; font-size: 23px; }
.charts { padding-left: 70px; font-weight: 700; }
.chart-item { padding-left: 70px; gap: 20px; font-size: 23px; }
.semi { font-family: "Open Sans", "Noto Sans", sans-serif; font-weight: 600; gap: 10px; }
.leaf.table-item { padding-left: 48px; gap: 14px; }

/* centre column */
.center { display: flex; flex-direction: column; gap: 12px; min-width: 0; min-height: 0; }
.map-pane { flex: 748 1 0; min-height: 0; display: flex; flex-direction: column; }
.chart-pane { flex: 926 1 0; min-height: 0; display: flex; flex-direction: column; }
.tabs { display: flex; align-items: stretch; height: 50px; border-bottom: 6px solid #d2d3d8; flex: none; }
.tab { display: flex; align-items: center; gap: 11px; padding: 4px 14px 0 11px; }
.tab.active { background: #d2d3d8; border-radius: 8px 8px 0 0; }
.tab button { margin-left: 7px; color: #6e6e6e; }
.tab.plain { color: #1c1c1c; padding-right: 50px; }
.tab.plain svg { margin-right: 2px; }
.tabs-menu { margin: 4px 9px 0 auto; color: #6e6e6e; }
.map { flex: 1; min-height: 0; width: 100%; display: block; background: #fff; border-left: 1px solid #d2d4d9; border-right: 1px solid #d2d4d9; }
.roads path { fill: none; vector-effect: non-scaling-stroke; stroke-linejoin: round; }
.roads path[fill] { fill: #97aef4; }
.local { stroke: #678e38; stroke-width: 6; }
.names { font: 25px "DejaVu Sans Condensed", "DejaVu Sans", sans-serif; fill: #000; stroke: #fff; stroke-width: 5; stroke-linejoin: round; }
.names text { paint-order: stroke; }
.map-status { display: flex; align-items: center; height: 50px; padding: 0 9px 0 9px; background: #f7f9f8; border: 2px solid #d2d4d9; border-top: 0; flex: none; }
.combo { display: grid; align-items: center; grid-template-columns: minmax(0, 1fr) 12px 8px; height: 48px; background: #fff; border: 2px solid #959595; color: #4c4c4c; }
.combo select { appearance: none; grid-area: 1 / 1 / 2 / 4; width: 100%; height: 100%; padding: 0 4px; border: 0; background: none; color: #000; outline: 0; }
.combo svg { grid-area: 1 / 2; pointer-events: none; }
.scale { width: 200px; height: 44px; margin-right: 8px; }
.scale select { padding-left: 11px; color: #1c1c1c; }
.map-status .on { width: 40px; height: 40px; margin-left: 8px; background: #9ccaeb; border: 2px solid #00619b; }
.map-status button + button { margin-left: 6px; }
.map-status .wider { margin-left: 12px; }
.map-status .dark { margin: 0 16px 0 10px; }
.coords { margin-left: 257px; }
.coord-menu { margin-left: 23px; color: #6e6e6e; }
.map-status .sel-feat { gap: 8px; margin: 0 14px; font-size: 23px; color: #9a9a9a; background: #fafafa; }
.map-status .faint { margin: 0 18px; }
.map-status .pause { margin: 0 16px; }
.map-status .refresh { margin-left: 12px; }

.chart-pane .tabs { height: 51px; font-size: 23px; }
.toolbar { display: flex; align-items: center; height: 64px; padding: 0 18px 0 18px; background: #eeeff2; border: 2px solid #c8cbce; flex: none; }
.toolbar hr { height: 48px; width: 4px; background: #d0d2d5; margin: 0 12px 0 20px; }
.toolbar button + button { margin-left: 21px; }
.toolbar button.export { margin-left: 14px; }
.toolbar .tri { margin-left: 2px; color: #6e6e6e; }
.toolbar strong { margin-right: 12px; }
.toolbar hr + button { margin-left: 6px; }
.toolbar .lit { width: 44px; height: 48px; background: #c3e7fa; margin-right: -8px; }
.toolbar hr + .lit { margin-left: 1px; }
.toolbar .lit + .chev { margin: 0 5px 0 18px; }
.toolbar button.push { margin-left: auto; }
.toolbar button.end { margin-left: 18px; }

.chart {
  flex: 1;
  min-height: 0;
  display: grid;
  grid-template-columns: 40px 59px minmax(0, 1fr);
  grid-template-rows: 86px minmax(0, 1fr) 71px 28px;
  background: #fff;
  border: 1px solid #d2d4d9;
  border-top: 0;
  font-family: "DejaVu Sans Condensed", "DejaVu Sans", sans-serif;
}
.chart h1 { grid-column: 1 / 4; font-size: 43px; line-height: 58px; text-align: center; }
.y-title { writing-mode: vertical-rl; transform: rotate(180deg); font-size: 32px; line-height: 40px; text-align: center; }
.cats, .plot { display: flex; flex-direction: column; }
.cats span, .plot div { flex: 1; min-height: 0; display: flex; align-items: center; line-height: 20px; }
.cats span { justify-content: flex-end; padding-right: 26px; font-size: 26px; }
.plot {
  overflow: hidden;
  border-left: 2px solid #9c9c9c;
  font-size: 23px;
  background:
    linear-gradient(#fff, #fff) 100% 0 / 5% 100% no-repeat,
    linear-gradient(90deg, #e8e8e8 2px, transparent 2px) 0 0 / 7.590% 100%;
}
.plot div { gap: 3px; white-space: nowrap; }
.plot i { height: 20px; flex: none; }
.ticks { grid-column: 3; display: flex; align-items: center; font-size: 26px; margin: 0 62px 0 -62px; }
.ticks span { width: 7.590%; flex: none; text-align: center; }
.x-title { grid-column: 3; padding-right: 24px; font-size: 32px; line-height: 24px; text-align: center; }

/* properties pane */
.props { display: flex; flex-direction: column; min-width: 0; min-height: 0; }
.props .panel { flex: 1; min-height: 0; }
.chart-name { display: flex; align-items: center; gap: 14px; height: 46px; padding-left: 15px; font-size: 28px; }
.prop-tabs { display: flex; gap: 22px; margin: 8px 13px 0; font-size: 24px; }
.prop-tabs a { height: 58px; padding-top: 18px; }
.prop-tabs .active { color: #1c1c1c; border-bottom: 4px solid #0079c1; }
.prop-tabs button { margin: 15px -2px 0 auto; height: 32px; }
.form { padding: 59px 23px 0 39px; }
.form h3, .form .h { display: flex; align-items: center; gap: 8px; height: 40px; font: 600 26px/40px "Open Sans", "Noto Sans", sans-serif; }
.lb { display: flex; align-items: center; gap: 10px; height: 32px; font-size: 23px; }
.lb.a { margin: 22px 0 10px; }
.lb.b { margin: 26px 0 10px; }
.lb.c { margin: 14px 0 12px; }
.lb.d { margin: 16px 0 22px; }
.line { display: flex; align-items: center; gap: 8px; margin-right: -4px; }
.line .combo { flex: 1; }
.inset { margin-left: 40px; }
.second { margin-top: 14px; }
.second input { flex: 1; min-width: 0; height: 48px; padding: 0 6px; background: #fff; border: 2px solid #c8c8c8; font-size: 21px; color: #6e6e6e; }
.second button { margin: 0 16px 0 4px; }
.select-btn { width: 152px; height: 44px; gap: 10px; border: 2px solid #4c4c4c; background: #fff; font-size: 23px; }
.form .toggle { margin-top: 26px; }
.toggle input { appearance: none; width: 52px; height: 28px; margin: 0; border: 2px solid #9b9b9b; border-radius: 14px; background: radial-gradient(circle at 12px 12px, #f7f9f8 12px, #9b9b9b 13px); }
.form .dl { margin-top: 11px; }
.check { display: flex; align-items: center; gap: 8px; height: 48px; color: #1c1c1c; }
.check input { border-radius: 0; }
.form .sort { margin: 16px 0 10px; }
.sorted .lead { grid-area: 1 / 1; margin-left: 4px; }
.sorted select { padding-left: 49px; color: #4c4c4c; font-size: 23px; }
.pane-tabs { display: flex; justify-content: space-between; height: 41px; line-height: 40px; font-size: 23px; }
.pane-tabs a { padding: 0 10px; white-space: nowrap; }
.pane-tabs .active { margin-top: -2px; line-height: 42px; background: #f7f9f8; border: 2px solid #d2d4d9; border-top: 0; border-radius: 0 0 8px 8px; color: #0079c1; }
```
